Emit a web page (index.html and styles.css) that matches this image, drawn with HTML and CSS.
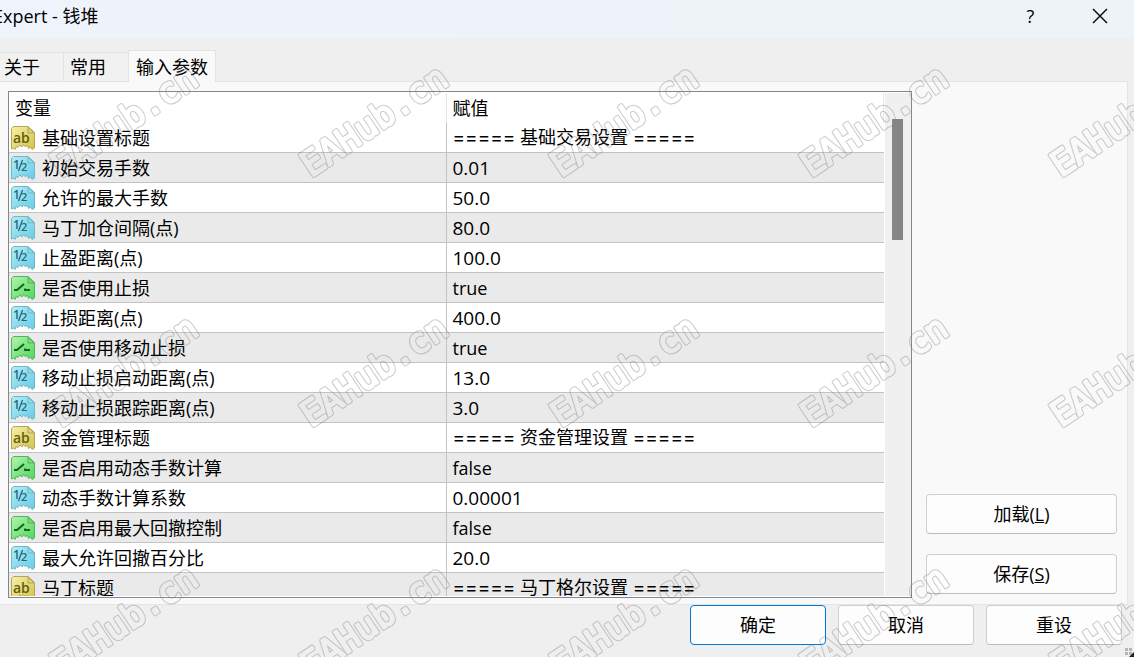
FILE: index.html
```html
<!DOCTYPE html>
<html lang="zh-CN">
<head>
    <meta charset="UTF-8">
    <meta name="viewport" content="width=device-width, initial-scale=1.0">
    <title>Expert - 钱堆</title>
    <link rel="stylesheet" href="styles.css">
</head>
<body>
    <svg class="defs" width="0" height="0" aria-hidden="true">
        <defs>
            <linearGradient id="yellow" x1="0" y1="0" x2="1" y2="1">
                <stop offset="0" stop-color="#f5f0a8"/>
                <stop offset="1" stop-color="#d6c249"/>
            </linearGradient>
            <linearGradient id="blue" x1="0" y1="0" x2="1" y2="1">
                <stop offset="0" stop-color="#b4edf8"/>
                <stop offset="1" stop-color="#66cce4"/>
            </linearGradient>
            <linearGradient id="green" x1="0" y1="0" x2="1" y2="1">
                <stop offset="0" stop-color="#b0f5ad"/>
                <stop offset="1" stop-color="#50d65d"/>
            </linearGradient>
            <path id="sheet" d="M2.5 .5H17l6.5 6V22l-2.500 1.500-1.500-2.500-2 1.500-1-3-2.500 1-1.500-2-1.500 2.500-2-2-2 2.500-2-1-1 3L2.500 22 .5 23V2.500Z"/>
            <symbol id="icon-string" viewBox="0 0 24 24">
                <use href="#sheet" fill="url(#yellow)" stroke="#b3a65c"/>
                <path d="M17 1v6h6Z" fill="#e4d568" stroke="#b3a65c"/>
                <text x="2" y="17" font-size="14" font-weight="600" fill="#665c10">ab</text>
            </symbol>
            <symbol id="icon-double" viewBox="0 0 24 24">
                <use href="#sheet" fill="url(#blue)" stroke="#74b8c5"/>
                <path d="M17 1v6h6Z" fill="#8cdcea" stroke="#74b8c5"/>
                <text x="2" y="13" font-size="12" font-weight="600" fill="#25697a">1</text>
                <path d="M7.500 15 11.500 4" stroke="#25697a" stroke-width="1.300"/>
                <text x="10" y="15" font-size="11" font-weight="600" fill="#25697a">2</text>
            </symbol>
            <symbol id="icon-bool" viewBox="0 0 24 24">
                <use href="#sheet" fill="url(#green)" stroke="#58b262"/>
                <path d="M17 1v6h6Z" fill="#77df79" stroke="#58b262"/>
                <path d="M3 14h3l7-6M14 12.500v1.500h5" fill="none" stroke="#17651e" stroke-width="2"/>
            </symbol>
            <!-- rounded outline: wide stroke with the inside of the letters cut out -->
            <mask id="hollow" maskUnits="userSpaceOnUse" x="0" y="0" width="250" height="250">
                <rect width="250" height="250" fill="#fff"/>
                <use href="#mark-text" fill="#000" stroke="#000" stroke-width="2"/>
            </mask>
            <text id="mark-text" class="mark-text" transform="translate(21 118) rotate(-34)">EAHub.cn</text>
            <pattern id="mark" x="40" y="60" width="250" height="250" patternUnits="userSpaceOnUse">
                <g mask="url(#hollow)">
                    <use href="#mark-text" fill="#808080" stroke="#808080" stroke-width="4"/>
                </g>
            </pattern>
        </defs>
    </svg>

    <div class="dialog">
        <header class="titlebar">
            <h1>Expert - 钱堆</h1>
            <button type="button" class="title-button" aria-label="帮助">?</button>
            <button type="button" class="title-button" aria-label="关闭">
                <svg width="16" height="16" viewBox="0 0 16 16"><path d="M1 1 15 15M15 1 1 15" stroke="#111" stroke-width="1.500"/></svg>
            </button>
        </header>

        <nav class="tabs">
            <button type="button" class="tab first">关于</button>
            <button type="button" class="tab">常用</button>
            <button type="button" class="tab active">输入参数</button>
        </nav>

        <main class="panel">
            <div class="list">
                <div class="list-view">
                    <table>
                        <thead>
                            <tr><th>变量</th><th>赋值</th></tr>
                        </thead>
                        <tbody>
                            <tr><td><div class="name"><svg class="icon"><use href="#icon-string"/></svg>基础设置标题</div></td><td><span class="eq">=====</span> 基础交易设置 <span class="eq">=====</span></td></tr>
                            <tr><td><div class="name"><svg class="icon"><use href="#icon-double"/></svg>初始交易手数</div></td><td class="num">0.01</td></tr>
                            <tr><td><div class="name"><svg class="icon"><use href="#icon-double"/></svg>允许的最大手数</div></td><td class="num">50.0</td></tr>
                            <tr><td><div class="name"><svg class="icon"><use href="#icon-double"/></svg>马丁加仓间隔(点)</div></td><td class="num">80.0</td></tr>
                            <tr><td><div class="name"><svg class="icon"><use href="#icon-double"/></svg>止盈距离(点)</div></td><td class="num">100.0</td></tr>
                            <tr><td><div class="name"><svg class="icon"><use href="#icon-bool"/></svg>是否使用止损</div></td><td>true</td></tr>
                            <tr><td><div class="name"><svg class="icon"><use href="#icon-double"/></svg>止损距离(点)</div></td><td class="num">400.0</td></tr>
                            <tr><td><div class="name"><svg class="icon"><use href="#icon-bool"/></svg>是否使用移动止损</div></td><td>true</td></tr>
                            <tr><td><div class="name"><svg class="icon"><use href="#icon-double"/></svg>移动止损启动距离(点)</div></td><td class="num">13.0</td></tr>
                            <tr><td><div class="name"><svg class="icon"><use href="#icon-double"/></svg>移动止损跟踪距离(点)</div></td><td class="num">3.0</td></tr>
                            <tr><td><div class="name"><svg class="icon"><use href="#icon-string"/></svg>资金管理标题</div></td><td><span class="eq">=====</span> 资金管理设置 <span class="eq">=====</span></td></tr>
                            <tr><td><div class="name"><svg class="icon"><use href="#icon-bool"/></svg>是否启用动态手数计算</div></td><td>false</td></tr>
                            <tr><td><div class="name"><svg class="icon"><use href="#icon-double"/></svg>动态手数计算系数</div></td><td class="num">0.00001</td></tr>
                            <tr><td><div class="name"><svg class="icon"><use href="#icon-bool"/></svg>是否启用最大回撤控制</div></td><td>false</td></tr>
                            <tr><td><div class="name"><svg class="icon"><use href="#icon-double"/></svg>最大允许回撤百分比</div></td><td class="num">20.0</td></tr>
                            <tr><td><div class="name"><svg class="icon"><use href="#icon-string"/></svg>马丁标题</div></td><td><span class="eq">=====</span> 马丁格尔设置 <span class="eq">=====</span></td></tr>
                        </tbody>
                    </table>
                </div>
                <div class="scrollbar"><div class="thumb"></div></div>
            </div>
            <div class="side">
                <button type="button" class="button">加载(<u>L</u>)</button>
                <button type="button" class="button">保存(<u>S</u>)</button>
            </div>
        </main>

        <footer class="actions">
            <button type="button" class="button default">确定</button>
            <button type="button" class="button">取消</button>
            <button type="button" class="button">重设</button>
        </footer>

        <svg class="grip" width="9" height="9" viewBox="0 0 9 9" aria-hidden="true">
            <path d="M0 0h3v3H0zM4 0h3v3H4zM0 4h3v3H0zM4 4h3v3H4z" fill="#b5b5b5"/>
            <path d="M9 4v5H4Z" fill="#222"/>
        </svg>
        <svg class="watermark" aria-hidden="true"><rect width="100%" height="100%" fill="url(#mark)"/></svg>
    </div>
</body>
</html>
```

FILE: styles.css
```css
* {
    box-sizing: border-box;
}

body {
    margin: 0;
    background-color: #efefef;
    color: #000;
    font-family: "Open Sans", "Noto Sans CJK SC", sans-serif;
    font-size: 18px;
    line-height: 24px;
}

button {
    font: inherit;
    color: inherit;
}

.defs {
    position: absolute;
}

.dialog {
    position: relative;
    display: flex;
    flex-direction: column;
    height: 100vh;
    overflow: hidden;
}

/* title bar */
.titlebar {
    display: flex;
    align-items: flex-start;
    height: 38px;
    padding-top: 4px;
    background: linear-gradient(to right, #eff3fb, #eef3f7);
}

.titlebar h1 {
    flex: 1;
    margin: 0 0 0 -7px;
    font-size: 18px;
    font-weight: normal;
}

.title-button {
    display: flex;
    align-items: center;
    justify-content: center;
    width: 69px;
    height: 24px;
    padding: 0;
    border: none;
    background: none;
}

/* tabs */
.tabs {
    display: flex;
    align-items: flex-end;
    height: 44px;
    margin-bottom: -1px;
    z-index: 1;
}

.tab {
    height: 30px;
    padding: 0 22px 0 6px;
    border: 1px solid #e3e3e3;
    border-right: none;
    background-color: #f1f1f1;
}

.tab.first {
    padding: 0 23px 0 4px;
    border-left: none;
}

.tab.active {
    height: 32px;
    padding: 0 7px;
    border-right: 1px solid #e3e3e3;
    border-bottom: none;
    background-color: #f9f9f9;
}

/* parameter list */
.panel {
    flex: 1;
    display: flex;
    gap: 14px;
    min-height: 0;
    margin-right: 6px;
    padding: 9px 10px 6px 8px;
    border: 1px solid #e5e5e5;
    border-left: none;
    background-color: #f9f9f9;
}

.list {
    flex: 1;
    display: flex;
    padding: 1px 0;
    border: 1px solid #828790;
    background-color: #fff;
}

.list-view {
    flex: 1;
    overflow: hidden;
}

table {
    width: 100%;
    table-layout: fixed;
    border-spacing: 0;
}

th,
td {
    height: 30px;
    padding: 0 6px;
    text-align: left;
    font-weight: normal;
    white-space: nowrap;
}

th {
    border-right: 1px solid #e5e5e5;
}

td {
    border-bottom: 1px solid #c3c3c3;
}

td:first-child {
    padding-left: 2px;
    border-right: 1px solid #c3c3c3;
}

tbody tr:nth-child(even) {
    background-color: #eaeaea;
}

.name {
    display: flex;
    align-items: center;
    gap: 7px;
}

.icon {
    width: 24px;
    height: 24px;
    font-family: "Open Sans", sans-serif;
}

.num {
    font-size: 19px;
}

.eq {
    font-family: Inter, sans-serif;
    font-size: 19px;
}

.scrollbar {
    width: 26px;
    margin-left: 1px;
    padding: 26px 8px 0 7px;
    background-color: #f0f0f0;
}

.thumb {
    height: 121px;
    background-color: #858585;
}

/* buttons */
.side {
    display: flex;
    flex-direction: column;
    justify-content: flex-end;
    gap: 20px;
    width: 191px;
    padding-bottom: 4px;
}

.button {
    height: 40px;
    padding: 0;
    border: 1px solid #d0d0d0;
    border-bottom-color: #bcbcbc;
    border-radius: 4px;
    background-color: #fdfdfd;
}

.button.default {
    border-color: #0078d4;
}

.actions {
    display: flex;
    justify-content: flex-end;
    gap: 12px;
    height: 52px;
    padding-right: 12px;
}

.actions .button {
    width: 136px;
}

.grip {
    position: absolute;
    right: 0;
    bottom: 0;
}

.watermark {
    position: absolute;
    top: 0;
    left: 0;
    width: 100%;
    height: 100%;
    z-index: 2;
    opacity: 0.4;
    pointer-events: none;
}

.mark-text {
    font-family: "DejaVu Sans Mono", monospace;
    font-size: 35px;
    stroke-linejoin: round;
}
```
